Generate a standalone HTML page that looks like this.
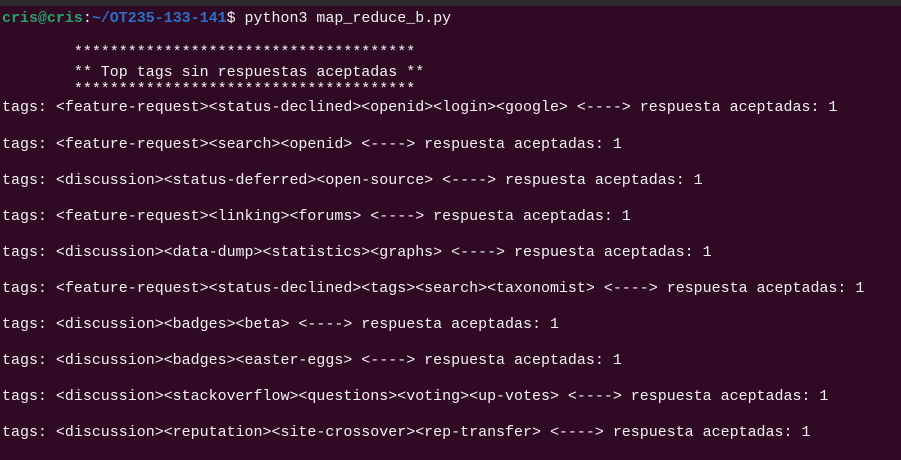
<!DOCTYPE html>
<html><head><meta charset="utf-8"><style>
html,body{margin:0;padding:0}
body{width:901px;height:460px;background:#300a24;position:relative;overflow:hidden;font-family:"Liberation Mono","DejaVu Sans Mono",monospace;font-size:14.97px;color:#f2f2f2}
.bar{position:absolute;left:0;top:0;width:901px;height:6px;background:#2c2c2c}
.l{position:absolute;left:2px;white-space:pre;line-height:18px;height:18px}
.g{color:#26a269;font-weight:bold}
.b{color:#2a6fc9;font-weight:bold}
</style></head><body>
<div class="bar"></div>
<div class="l" style="top:10px"><span class="g">cris@cris</span>:<span class="b">~/OT235-133-141</span>$ python3 map_reduce_b.py</div>
<div class="l" style="top:44px">        **************************************</div>
<div class="l" style="top:64px">        ** Top tags sin respuestas aceptadas **</div>
<div class="l" style="top:81px">        **************************************</div>
<div class="l" style="top:99px">tags: &lt;feature-request&gt;&lt;status-declined&gt;&lt;openid&gt;&lt;login&gt;&lt;google&gt; &lt;----&gt; respuesta aceptadas: 1</div>
<div class="l" style="top:136px">tags: &lt;feature-request&gt;&lt;search&gt;&lt;openid&gt; &lt;----&gt; respuesta aceptadas: 1</div>
<div class="l" style="top:172px">tags: &lt;discussion&gt;&lt;status-deferred&gt;&lt;open-source&gt; &lt;----&gt; respuesta aceptadas: 1</div>
<div class="l" style="top:208px">tags: &lt;feature-request&gt;&lt;linking&gt;&lt;forums&gt; &lt;----&gt; respuesta aceptadas: 1</div>
<div class="l" style="top:244px">tags: &lt;discussion&gt;&lt;data-dump&gt;&lt;statistics&gt;&lt;graphs&gt; &lt;----&gt; respuesta aceptadas: 1</div>
<div class="l" style="top:280px">tags: &lt;feature-request&gt;&lt;status-declined&gt;&lt;tags&gt;&lt;search&gt;&lt;taxonomist&gt; &lt;----&gt; respuesta aceptadas: 1</div>
<div class="l" style="top:316px">tags: &lt;discussion&gt;&lt;badges&gt;&lt;beta&gt; &lt;----&gt; respuesta aceptadas: 1</div>
<div class="l" style="top:352px">tags: &lt;discussion&gt;&lt;badges&gt;&lt;easter-eggs&gt; &lt;----&gt; respuesta aceptadas: 1</div>
<div class="l" style="top:388px">tags: &lt;discussion&gt;&lt;stackoverflow&gt;&lt;questions&gt;&lt;voting&gt;&lt;up-votes&gt; &lt;----&gt; respuesta aceptadas: 1</div>
<div class="l" style="top:424px">tags: &lt;discussion&gt;&lt;reputation&gt;&lt;site-crossover&gt;&lt;rep-transfer&gt; &lt;----&gt; respuesta aceptadas: 1</div>
</body></html>
